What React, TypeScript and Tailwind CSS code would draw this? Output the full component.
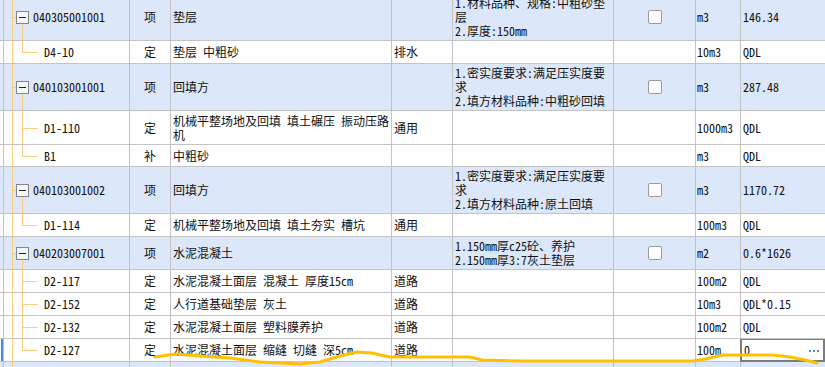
type Row = {
  kind: "parent" | "child";
  last?: boolean;
  h: number;
  code: string;
  type: string;
  name: string[];
  major?: string;
  feature?: string[];
  unit?: string;
  qty?: string;
  selected?: boolean;
};

const rows: Row[] = [
  { kind: "parent", h: 47, code: "040305001001", type: "项", name: ["垫层"], feature: ["1.材料品种、规格:中粗砂垫", "层", "2.厚度:150mm"], unit: "m3", qty: "146.34" },
  { kind: "child", last: true, h: 23, code: "D4-10", type: "定", name: ["垫层 中粗砂"], major: "排水", unit: "10m3", qty: "QDL" },
  { kind: "parent", h: 47, code: "040103001001", type: "项", name: ["回填方"], feature: ["1.密实度要求:满足压实度要", "求", "2.填方材料品种:中粗砂回填"], unit: "m3", qty: "287.48" },
  { kind: "child", h: 34, code: "D1-110", type: "定", name: ["机械平整场地及回填 填土碾压 振动压路", "机"], major: "通用", unit: "1000m3", qty: "QDL" },
  { kind: "child", last: true, h: 22, code: "B1", type: "补", name: ["中粗砂"], unit: "m3", qty: "QDL" },
  { kind: "parent", h: 47, code: "040103001002", type: "项", name: ["回填方"], feature: ["1.密实度要求:满足压实度要", "求", "2.填方材料品种:原土回填"], unit: "m3", qty: "1170.72" },
  { kind: "child", last: true, h: 23, code: "D1-114", type: "定", name: ["机械平整场地及回填 填土夯实 槽坑"], major: "通用", unit: "100m3", qty: "QDL" },
  { kind: "parent", h: 33, code: "040203007001", type: "项", name: ["水泥混凝土"], feature: ["1.150mm厚c25砼、养护", "2.150mm厚3:7灰土垫层"], unit: "m2", qty: "0.6*1626" },
  { kind: "child", h: 23, code: "D2-117", type: "定", name: ["水泥混凝土面层 混凝土 厚度15cm"], major: "道路", unit: "100m2", qty: "QDL" },
  { kind: "child", h: 23, code: "D2-152", type: "定", name: ["人行道基础垫层 灰土"], major: "道路", unit: "10m3", qty: "QDL*0.15" },
  { kind: "child", h: 23, code: "D2-132", type: "定", name: ["水泥混凝土面层 塑料膜养护"], major: "道路", unit: "100m2", qty: "QDL" },
  { kind: "child", last: true, h: 23, code: "D2-127", type: "定", name: ["水泥混凝土面层 缩缝 切缝 深5cm"], major: "道路", unit: "100m", qty: "0", selected: true },
  { kind: "parent", h: 47, code: "040103001003", type: "项", name: ["回填方"], feature: ["1.素土材料品种、含水率", "2.密实度要求:满足压实度要求"], unit: "m3", qty: "98.5" },
];

const line = "bg-[#ffcb7d]";

function TreeCell({ r }: { r: Row }) {
  return (
    <div className="relative flex h-full items-center border-r border-[#c3c3c3]">
      {/* root line */}
      <div className={`absolute left-[8px] top-0 h-full w-px ${line}`} />
      {r.kind === "parent" ? (
        <>
          <div className={`absolute left-[9px] top-1/2 h-px w-[3px] ${line}`} />
          <div className={`absolute left-[18px] top-1/2 bottom-0 w-px ${line}`} />
          <div className="relative ml-[12px] flex h-[13px] w-[13px] items-center justify-center border border-[#858585] bg-[#f4f7fc]">
            <div className="h-px w-[7px] bg-[#222]" />
          </div>
          <span className="ml-[4px] whitespace-nowrap">{r.code}</span>
        </>
      ) : (
        <>
          <div className={`absolute left-[18px] top-0 w-px ${line} ${r.last ? "h-1/2" : "h-full"}`} />
          <div className={`absolute left-[18px] top-1/2 h-px w-[16px] ${line}`} />
          <span className="ml-[40px] whitespace-nowrap">{r.code}</span>
        </>
      )}
    </div>
  );
}

function Lines({ items }: { items?: string[] }) {
  return (
    <div className="flex flex-col">
      {(items || []).map((t, i) => (
        <div key={i} className="whitespace-pre">{t}</div>
      ))}
    </div>
  );
}

function TableRow({ r }: { r: Row }) {
  const bg = r.kind === "parent" ? "bg-[#dce7fa]" : "bg-white";
  const cell = "flex h-full items-center overflow-hidden border-r border-[#c3c3c3]";
  return (
    <div
      className={`grid shrink-0 grid-cols-[4px_126px_41px_221px_61px_161px_82px_45px_1fr] border-b border-[#c3c3c3] ${bg}`}
      style={{ height: r.h }}
    >
      <div className="flex h-full border-r border-[#c3c3c3] pl-px">
        {r.selected && <div className="w-[2px] bg-[#3d8be8]" />}
      </div>
      <TreeCell r={r} />
      <div className={`${cell} justify-center`}>{r.type}</div>
      <div className={`${cell} pl-[2px]`}>
        <Lines items={r.name} />
      </div>
      <div className={`${cell} pl-[2px]`}>{r.major}</div>
      <div className={`${cell} pl-[2px]`}>
        <Lines items={r.feature} />
      </div>
      <div className={`${cell} justify-center`}>
        {r.kind === "parent" && (
          <div className="h-[14px] w-[14px] rounded-[2px] border border-[#9b9b9b] bg-white" />
        )}
      </div>
      <div className={`${cell} pl-[1px]`}>{r.unit}</div>
      {r.selected ? (
        <div className="relative -mb-px -ml-px flex h-[calc(100%+1px)] items-center justify-between border-2 border-t border-[#7d7d7d] bg-white pl-[2px] pr-[4px]">
          <span>{r.qty}</span>
          <div className="flex gap-[2px] pt-[2px]">
            <div className="h-[2px] w-[2px] bg-[#4a8fd8]" />
            <div className="h-[2px] w-[2px] bg-[#4a8fd8]" />
            <div className="h-[2px] w-[2px] bg-[#4a8fd8]" />
          </div>
        </div>
      ) : (
        <div className="flex h-full items-center pl-[2px]">{r.qty}</div>
      )}
    </div>
  );
}

export default function App() {
  return (
    <div className="relative h-[367px] w-[825px] overflow-hidden bg-white font-['Noto_Sans_Mono_CJK_SC','Noto_Sans_CJK_SC',monospace] text-[12px] leading-[14px] text-[#111]">
      <div className="-mt-[6px] flex flex-col">
        {rows.map((r, i) => (
          <TableRow key={i} r={r} />
        ))}
      </div>
      {/* hand-drawn highlight stroke */}
      <svg className="pointer-events-none absolute left-0 top-0" width="825" height="367">
        <polyline
          points="155,357 175,354 200,356 230,358 260,362 300,364 320,362 340,356 357,352 372,353 390,357 430,357 470,357 482,360 520,361 560,361 620,361 693,361 705,359 723,355 735,355 773,355 790,357 805,360 817,363"
          fill="none"
          stroke="#ffc000"
          strokeWidth="3"
          strokeLinejoin="round"
          strokeLinecap="round"
        />
      </svg>
    </div>
  );
}
